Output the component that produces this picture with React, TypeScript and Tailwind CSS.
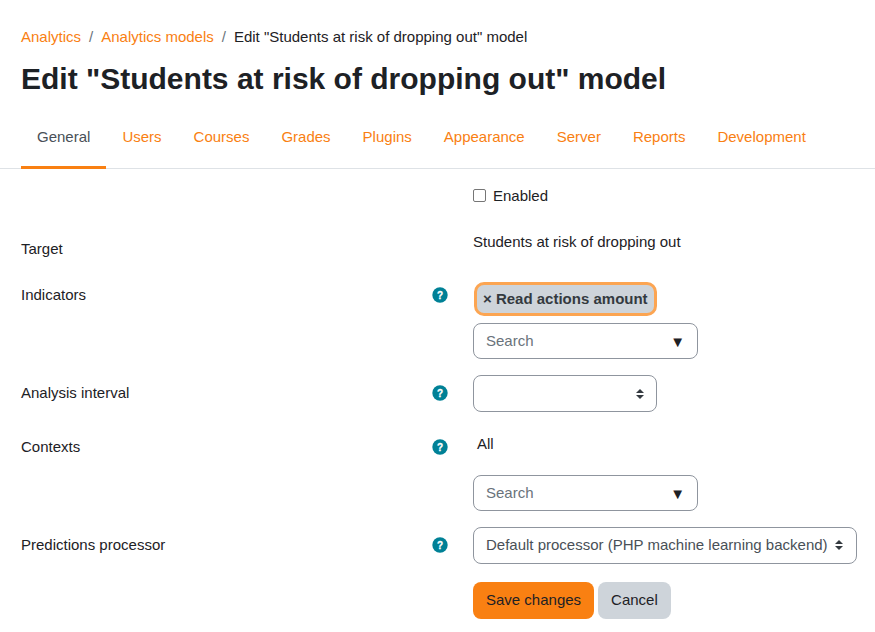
import React from "react";

const tabs = ["Users", "Courses", "Grades", "Plugins", "Appearance", "Server", "Reports", "Development"];

function Help() {
  return (
    <svg width="16" height="16" viewBox="0 0 16 16" className="block">
      <circle cx="8" cy="8" r="7.7" fill="#008196" />
      <text x="8" y="11.6" textAnchor="middle" fontSize="10" fontWeight="700" fill="#fff" stroke="#fff" strokeWidth="0.3" fontFamily="Liberation Sans, sans-serif">?</text>
    </svg>
  );
}

function Caret() {
  return (
    <svg width="8" height="12" viewBox="0 0 8 12" className="block">
      <path d="M0 5 L4 1 L8 5 Z M0 7 L4 11 L8 7 Z" fill="#343a40" />
    </svg>
  );
}

function SearchBox() {
  return (
    <div className="flex h-[36px] w-[225px] items-center justify-between rounded-lg border border-[#8f959e] bg-white pl-[12px] pr-[12px]">
      <span className="text-[#6a737b]">Search</span>
      <span className="text-[#1d2125] text-[15px] leading-none">▼</span>
    </div>
  );
}

function Row({ label, help, labelTop, children, className }: { label?: string; help?: boolean; labelTop: number; children: React.ReactNode; className?: string }) {
  return (
    <div className={"flex " + (className ?? "")}>
      <div className="flex w-[411px] shrink-0" style={{ paddingTop: labelTop }}>
        <span>{label}</span>
      </div>
      <div className="w-[41px] shrink-0" style={{ paddingTop: labelTop + 4 }}>
        {help ? <Help /> : null}
      </div>
      <div>{children}</div>
    </div>
  );
}

export default function App() {
  return (
    <div className="h-[632px] w-[875px] overflow-hidden bg-white text-[15px] leading-[24px] text-[#1d2125] [font-family:'Liberation_Sans',Arial,sans-serif]">
      <div className="px-[21px] pt-[25px]">
        <nav className="flex items-center">
          <a className="text-[#f98012]">Analytics</a>
          <span className="px-[8px] text-[#6a737b]">/</span>
          <a className="text-[#f98012]">Analytics models</a>
          <span className="px-[8px] text-[#6a737b]">/</span>
          <span>Edit "Students at risk of dropping out" model</span>
        </nav>
        <h1 className="mt-[12px] text-[30px] font-bold leading-[36px]">Edit "Students at risk of dropping out" model</h1>
      </div>
      <div className="mt-[8px] flex h-[64px] border-b border-[#dee2e6] px-[21px]">
        <div className="flex h-[64px] items-center border-b-[3px] border-[#f98012] px-[16px] pt-[2px] text-[#495057]">General</div>
        {tabs.map((t) => (
          <div key={t} className="flex h-[64px] items-center px-[16px] pb-[1px] text-[#f98012]">{t}</div>
        ))}
      </div>
      <form className="pt-[14px] pl-[21px]">
        <Row labelTop={0} className="h-[46px]">
          <label className="flex items-center gap-[7px] pt-[1px]">
            <span className="-mt-[1px] block h-[13px] w-[13px] rounded-[2px] border border-[#767676] bg-white" />
            <span>Enabled</span>
          </label>
        </Row>
        <Row label="Target" labelTop={8} className="h-[53px]">
          <div className="pt-[1px]">Students at risk of dropping out</div>
        </Row>
        <Row label="Indicators" help labelTop={1} className="h-[93px]">
          <div className="flex flex-col gap-[7px]">
            <span className="ml-[1px] flex h-[34px] w-[183px] items-center rounded-[10px] border-[3px] border-[#fca552] bg-[#ced4da] pl-[6px] font-bold text-[#343a40]">× Read actions amount</span>
            <SearchBox />
          </div>
        </Row>
        <Row label="Analysis interval" help labelTop={6} className="h-[59px]">
          <div className="flex h-[37px] w-[184px] items-center justify-end rounded-lg border border-[#8f959e] bg-white pr-[12px]"><Caret /></div>
        </Row>
        <Row label="Contexts" help labelTop={1} className="h-[93px]">
          <div className="pl-[4px] -mt-[2px]">All</div>
          <div className="mt-[19px]"><SearchBox /></div>
        </Row>
        <Row label="Predictions processor" help labelTop={6} className="h-[55px]">
          <div className="flex h-[37px] w-[384px] items-center justify-between rounded-lg border border-[#8f959e] bg-white pl-[12px] pr-[13px] pb-[1px] text-[#495057]">
            <span>Default processor (PHP machine learning backend)</span>
            <Caret />
          </div>
        </Row>
        <Row labelTop={0}>
          <div className="flex gap-[4px]">
            <button type="button" className="h-[37px] rounded-lg bg-[#f98012] px-[13px] pb-[1px]">Save changes</button>
            <button type="button" className="h-[37px] rounded-lg bg-[#ced4da] px-[13px] pb-[1px]">Cancel</button>
          </div>
        </Row>
      </form>
    </div>
  );
}
